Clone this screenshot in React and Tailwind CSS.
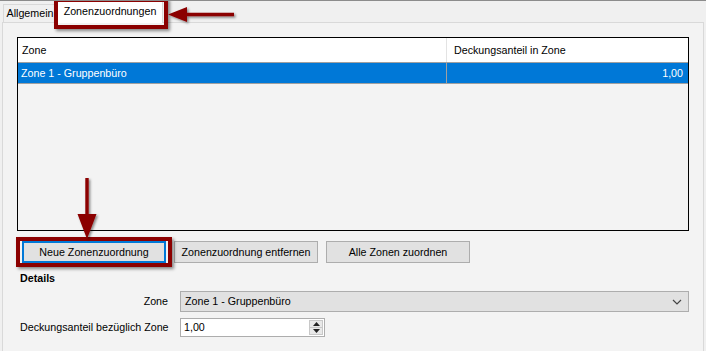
import React from "react";

const FONT = { fontFamily: '"Liberation Sans", Arial, sans-serif' };

function Btn({ children, focused }) {
  return (
    <button
      className={
        "flex h-[22px] w-[144px] items-center justify-center bg-[#e1e1e1] text-[10.7px] text-black " +
        (focused ? "border-2 border-[#0078d7]" : "border border-[#adadad]")
      }
    >
      {children}
    </button>
  );
}

export default function App() {
  return (
    <div
      className="relative h-[351px] w-[706px] overflow-hidden border-t border-[#8c8c8c] bg-[#f0f0f0] text-[10.7px] text-black"
      style={FONT}
    >
      {/* tab strip */}
      <div className="flex h-[21px] items-end pl-[3px]">
        <div className="flex h-[18px] w-[54px] items-center justify-center border border-b-0 border-[#d9d9d9] bg-[#f0f0f0]">
          Allgemein
        </div>
        <div className="relative z-10 -mb-px flex h-[22px] w-[106px] items-center justify-center border border-b-0 border-[#d9d9d9] bg-white pb-[2px]">
          Zonenzuordnungen
        </div>
      </div>

      {/* tab page */}
      <div className="mx-[2px] h-[340px] border border-[#d9d9d9] bg-[#f3f3f3] pl-[14px] pt-[14px]">
        {/* grid */}
        <div className="flex h-[194px] w-[672px] flex-col border border-black bg-[#f3f3f3]">
          <div className="flex h-[25px] border-b border-[#a0a0a0] bg-white">
            <div className="flex w-[429px] items-center border-r border-[#e3e3e3] pl-[4px]">Zone</div>
            <div className="flex flex-1 items-center pl-[7px]">Deckungsanteil in Zone</div>
          </div>
          <div className="flex h-[21px] border-b border-[#a0a0a0] bg-[#0078d7] text-white">
            <div className="flex w-[429px] items-center border-r border-[#a0a0a0] pl-[3px]">Zone 1 - Gruppenbüro</div>
            <div className="flex flex-1 items-end justify-end pb-[2px] pr-[5px]">1,00</div>
          </div>
        </div>

        {/* buttons */}
        <div className="ml-[5px] mt-[10px] flex gap-[8px]">
          <Btn focused>Neue Zonenzuordnung</Btn>
          <Btn>Zonenzuordnung entfernen</Btn>
          <Btn>Alle Zonen zuordnen</Btn>
        </div>

        {/* details */}
        <div className="ml-[3px] mt-[9px] font-bold leading-[13px]">Details</div>
        <div className="ml-[3px] mt-[6px] flex h-[21px] items-center">
          <div className="w-[156px] pr-[8px] text-right">Zone</div>
          <div className="ml-[4px] flex h-[21px] w-[509px] items-center justify-between border border-[#adadad] bg-[#e1e1e1] pl-[4px] pr-[6px]">
            <span>Zone 1 - Gruppenbüro</span>
            <svg width="10" height="6" viewBox="0 0 10 6" fill="none" stroke="#444" strokeWidth="1.2">
              <path d="M1 1l4 4 4-4" />
            </svg>
          </div>
        </div>
        <div className="ml-[3px] mt-[6px] flex h-[19px] items-center">
          <div className="w-[156px]">Deckungsanteil bezüglich Zone</div>
          <div className="ml-[4px] flex h-[19px] w-[145px] items-center justify-between border border-[#adadad] bg-white pl-[3px] pr-[1px]">
            <span>1,00</span>
            <div className="flex h-[15px] w-[14px] flex-col border border-[#c8c8c8]">
              <div className="flex flex-1 items-center justify-center border-b border-[#c8c8c8] bg-[#e8e8e8]">
                <svg width="7" height="4" viewBox="0 0 7 4"><path d="M0 4L3.5 0 7 4z" fill="#222" /></svg>
              </div>
              <div className="flex flex-1 items-center justify-center bg-[#e8e8e8]">
                <svg width="7" height="4" viewBox="0 0 7 4"><path d="M0 0h7L3.5 4z" fill="#222" /></svg>
              </div>
            </div>
          </div>
        </div>
      </div>

      {/* annotation overlays */}
      <div className="absolute left-[54px] top-[-3px] z-20 h-[31px] w-[114px] border-[4px] border-[#8b0000] shadow-[2px_2px_3px_rgba(0,0,0,0.45)]" />
      <div className="absolute left-[16px] top-[236px] z-20 h-[30px] w-[156px] border-[4px] border-[#8b0000] shadow-[2px_2px_3px_rgba(0,0,0,0.45)]" />

      <svg className="absolute left-0 top-0 z-30" width="706" height="351" style={{ overflow: "visible" }}>
        <defs>
          <filter id="sh" x="-20%" y="-20%" width="140%" height="140%">
            <feDropShadow dx="1.5" dy="1.5" stdDeviation="1.2" floodColor="#000" floodOpacity="0.45" />
          </filter>
        </defs>
        <g fill="#8b0000" filter="url(#sh)">
          <path d="M168 13.5L187 6V11.8H234V15.2H187V21Z" />
          <path d="M85.3 177H88.7V213H96.5L87 238 77.5 213H85.3Z" />
        </g>
      </svg>
    </div>
  );
}
